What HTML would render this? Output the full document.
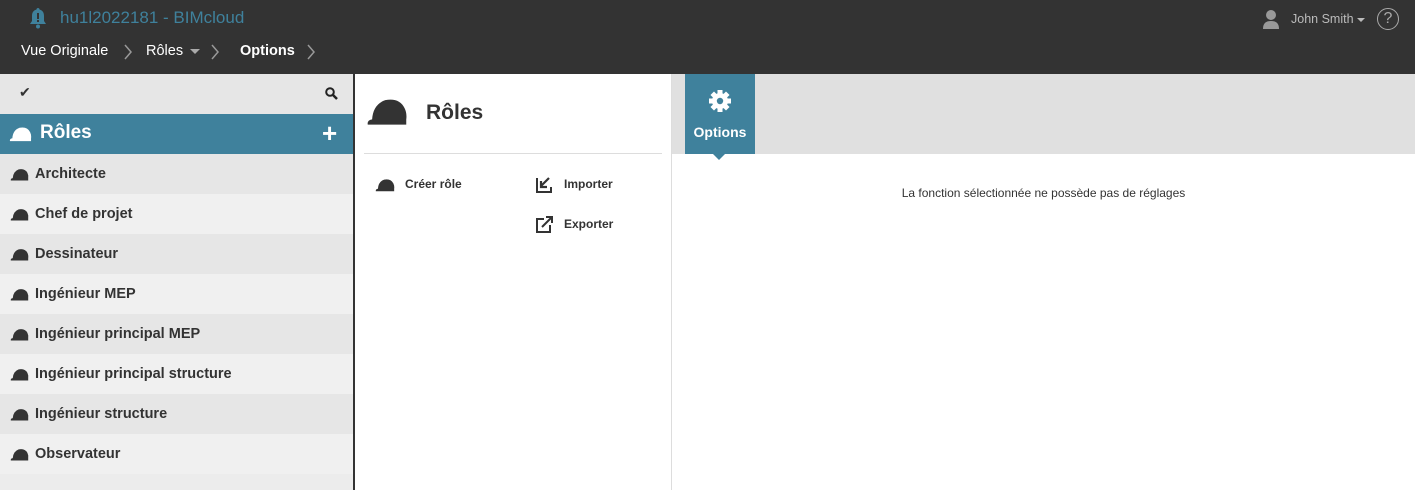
<!DOCTYPE html>
<html><head><meta charset="utf-8"><style>
*{margin:0;padding:0;box-sizing:border-box}
body{width:1415px;height:490px;overflow:hidden;font-family:"Liberation Sans",sans-serif;background:#fff;position:relative;color:#333}
.top{position:absolute;left:0;top:0;width:1415px;height:74px;background:#333}
.abs{position:absolute}
.side{position:absolute;left:0;top:74px;width:353px;height:416px;background:#ececec}
.row{height:40px;display:flex;align-items:center;padding-left:10px;font-weight:bold;font-size:14.5px;color:#333}
.row svg{margin-right:6px}
.a{background:#e6e6e6}.b{background:#f0f0f0}
.chev{position:absolute;top:44px}
</style></head><body>
<svg width="0" height="0" style="position:absolute"><defs><symbol id="h" viewBox="0 0 24 16"><path d="M1 15.5Q0.5 13 3.5 12.5Q4 4 11 1.5Q19 0 22 6Q23.5 9 23 12.5L23 15.5Z" fill="currentColor"/></symbol></defs></svg>
<div class="top">
<svg class="abs" style="left:28px;top:7px" width="20" height="22" viewBox="0 0 20 22"><path d="M10 1c-1 0-1.5.7-1.5 1.5C5 3.5 4 6 4 9v5l-2 3h16l-2-3V9c0-3-1-5.5-4.5-6.5C11.5 1.7 11 1 10 1z" fill="#3f819c"/><rect x="9" y="6" width="2" height="6" fill="#333"/><rect x="9" y="13" width="2" height="2" fill="#333"/><circle cx="10" cy="19.5" r="2" fill="#3f819c"/></svg>
<div class="abs" style="left:60px;top:8px;font-size:17px;color:#3f819c">hu1l2022181 - BIMcloud</div>
<div class="abs" style="left:21px;top:43px;font-size:14.5px;color:#fff">Vue Originale</div>
<svg class="chev" style="left:123px" width="10" height="16" viewBox="0 0 10 16"><path d="M2 1l6 7-6 7" stroke="#999" stroke-width="1.5" fill="none"/></svg>
<div class="abs" style="left:146px;top:43px;font-size:14.5px;color:#fff">Rôles</div>
<div class="abs" style="left:190px;top:49px;width:0;height:0;border-left:5px solid transparent;border-right:5px solid transparent;border-top:5px solid #aaa"></div>
<svg class="chev" style="left:210px" width="10" height="16" viewBox="0 0 10 16"><path d="M2 1l6 7-6 7" stroke="#999" stroke-width="1.5" fill="none"/></svg>
<div class="abs" style="left:240px;top:43px;font-size:14.5px;color:#fff;font-weight:bold">Options</div>
<svg class="chev" style="left:306px" width="10" height="16" viewBox="0 0 10 16"><path d="M2 1l6 7-6 7" stroke="#999" stroke-width="1.5" fill="none"/></svg>
<svg class="abs" style="left:1262px;top:9px" width="18" height="21" viewBox="0 0 18 21"><circle cx="9" cy="6" r="5" fill="#999"/><path d="M1 20c0-6 3-8 8-8s8 2 8 8z" fill="#999"/></svg>
<div class="abs" style="left:1291px;top:12px;font-size:12.5px;color:#bbb">John Smith</div>
<div class="abs" style="left:1357px;top:18px;width:0;height:0;border-left:4px solid transparent;border-right:4px solid transparent;border-top:4px solid #bbb"></div>
<div class="abs" style="left:1377px;top:8px;width:22px;height:22px;border:1.5px solid #aaa;border-radius:50%;color:#aaa;font-size:16px;text-align:center;line-height:19px">?</div>
</div>
<div class="side">
<div style="height:40px;background:#e6e6e6;position:relative">
<div class="abs" style="left:19px;top:10px;font-size:14px">✔</div>
<svg class="abs" style="left:325px;top:13px" width="13" height="13" viewBox="0 0 13 13"><circle cx="5" cy="5" r="3.8" stroke="#222" stroke-width="2" fill="none"/><path d="M8 8l4 4" stroke="#222" stroke-width="2.5"/></svg>
</div>
<div style="height:40px;background:#3f819c;position:relative;color:#fff">
<svg class="abs" style="left:9px;top:12px;color:#fff" width="23" height="16"><use href="#h"/></svg>
<div class="abs" style="left:40px;top:8px;font-size:19px;font-weight:bold">Rôles</div>
<div class="abs" style="left:322px;top:4px;font-size:26px;font-weight:bold">+</div>
</div>
<div class="row a"><svg width="19" height="13"><use href="#h"/></svg>Architecte</div>
<div class="row b"><svg width="19" height="13"><use href="#h"/></svg>Chef de projet</div>
<div class="row a"><svg width="19" height="13"><use href="#h"/></svg>Dessinateur</div>
<div class="row b"><svg width="19" height="13"><use href="#h"/></svg>Ingénieur MEP</div>
<div class="row a"><svg width="19" height="13"><use href="#h"/></svg>Ingénieur principal MEP</div>
<div class="row b"><svg width="19" height="13"><use href="#h"/></svg>Ingénieur principal structure</div>
<div class="row a"><svg width="19" height="13"><use href="#h"/></svg>Ingénieur structure</div>
<div class="row b"><svg width="19" height="13"><use href="#h"/></svg>Observateur</div>
</div>
<div class="abs" style="left:353px;top:74px;width:2px;height:416px;background:#333"></div>
<svg class="abs" style="left:366px;top:96px;color:#333" width="42" height="31"><use href="#h"/></svg>
<div class="abs" style="left:426px;top:101px;font-size:21px;font-weight:bold">Rôles</div>
<div class="abs" style="left:364px;top:153px;width:298px;height:1px;background:#ddd"></div>
<svg class="abs" style="left:375px;top:178px" width="20" height="14"><use href="#h"/></svg>
<div class="abs" style="left:405px;top:177px;font-size:12px;font-weight:bold">Créer rôle</div>
<svg class="abs" style="left:536px;top:176px" width="17" height="17" viewBox="0 0 17 17"><path d="M1 2v14h14v-5" stroke="#333" stroke-width="2" fill="none"/><path d="M13 2L5 10M5 5v6h6" stroke="#333" stroke-width="2.2" fill="none"/></svg>
<div class="abs" style="left:564px;top:177px;font-size:12px;font-weight:bold">Importer</div>
<svg class="abs" style="left:536px;top:216px" width="17" height="17" viewBox="0 0 17 17"><path d="M8 3H1v13h13V9" stroke="#333" stroke-width="2" fill="none"/><path d="M6 11L15 2M10 1h6v6" stroke="#333" stroke-width="2" fill="none"/></svg>
<div class="abs" style="left:564px;top:217px;font-size:12px;font-weight:bold">Exporter</div>
<div class="abs" style="left:671px;top:74px;width:1px;height:416px;background:#ddd"></div>
<div class="abs" style="left:672px;top:74px;width:743px;height:80px;background:#e0e0e0"></div>
<div class="abs" style="left:685px;top:74px;width:70px;height:80px;background:#3f819c;color:#fff;text-align:center">
<svg style="position:absolute;left:23px;top:15px" width="24" height="24" viewBox="0 0 24 24"><g fill="#fff"><circle cx="12" cy="12" r="8"/><g id="t"><rect x="9.5" y="1" width="5" height="5"/><rect x="9.5" y="18" width="5" height="5"/></g><use href="#t" transform="rotate(45 12 12)"/><use href="#t" transform="rotate(90 12 12)"/><use href="#t" transform="rotate(135 12 12)"/></g><circle cx="12" cy="12" r="3.2" fill="#3f819c"/></svg>
<div style="position:absolute;left:0;width:70px;top:50px;font-size:14px;font-weight:bold">Options</div>
</div>
<div class="abs" style="left:713px;top:154px;width:0;height:0;border-left:6px solid transparent;border-right:6px solid transparent;border-top:6px solid #3f819c"></div>
<div class="abs" style="left:672px;top:186px;width:743px;text-align:center;font-size:12px;color:#333">La fonction sélectionnée ne possède pas de réglages</div>
</body></html>
